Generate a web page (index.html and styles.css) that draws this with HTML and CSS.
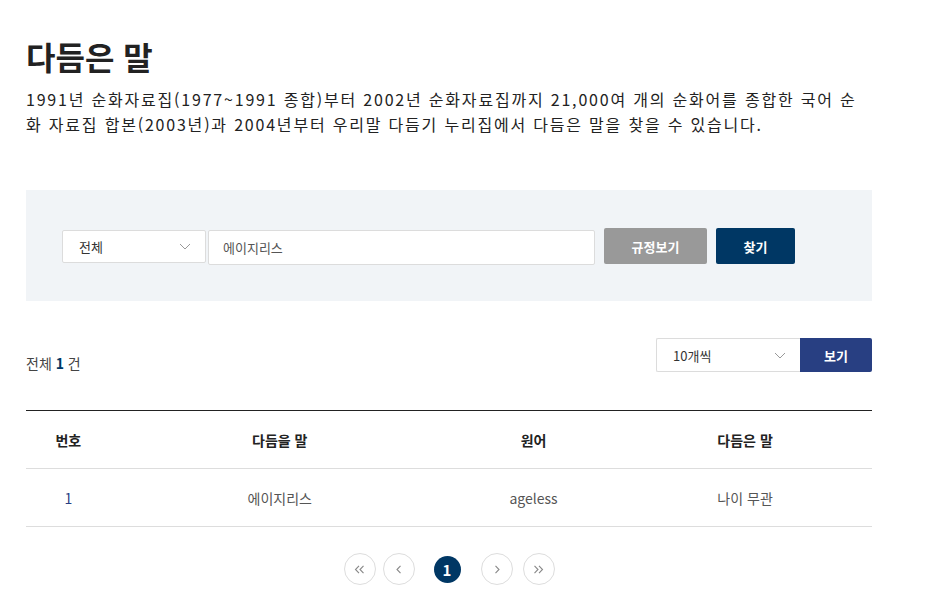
FILE: index.html
```html
<!DOCTYPE html>
<html lang="ko">
<head>
<meta charset="utf-8">
<title>다듬은 말</title>
<link rel="stylesheet" href="styles.css">
</head>
<body>
<div class="page">
  <h1 class="title">다듬은 말</h1>
  <p class="desc">1991년 순화자료집(1977~1991 종합)부터 2002년 순화자료집까지 21,000여 개의 순화어를 종합한 국어 순화 자료집 합본(2003년)과 2004년부터 우리말 다듬기 누리집에서 다듬은 말을 찾을 수 있습니다.</p>

  <div class="search-box">
    <div class="select select-type">
      <span>전체</span>
      <svg class="chev" width="12" height="7" viewBox="0 0 12 7"><path d="M1 1l5 5 5-5" fill="none" stroke="#999" stroke-width="1"/></svg>
    </div>
    <div class="input">에이지리스</div>
    <button class="btn btn-gray">규정보기</button>
    <button class="btn btn-navy">찾기</button>
  </div>

  <div class="list-head">
    <div class="total">전체 <strong>1</strong> 건</div>
    <div class="view-ctl">
      <div class="select select-count">
        <span>10개씩</span>
        <svg class="chev" width="12" height="7" viewBox="0 0 12 7"><path d="M1 1l5 5 5-5" fill="none" stroke="#999" stroke-width="1"/></svg>
      </div>
      <button class="btn btn-blue">보기</button>
    </div>
  </div>

  <table class="tbl">
    <colgroup>
      <col class="c1"><col class="c2"><col class="c3"><col class="c4">
    </colgroup>
    <thead>
      <tr><th>번호</th><th>다듬을 말</th><th>원어</th><th>다듬은 말</th></tr>
    </thead>
    <tbody>
      <tr><td class="num">1</td><td>에이지리스</td><td>ageless</td><td>나이 무관</td></tr>
    </tbody>
  </table>

  <div class="paging">
    <span class="pg pg-first"><svg width="11" height="9" viewBox="0 0 11 9"><path d="M5 0.8L1.5 4.5 5 8.2M9.5 0.8L6 4.5l3.5 3.7" fill="none" stroke="#888" stroke-width="1.1"/></svg></span>
    <span class="pg pg-prev"><svg width="6" height="9" viewBox="0 0 6 9"><path d="M4.5 0.8L1 4.5l3.5 3.7" fill="none" stroke="#888" stroke-width="1.1"/></svg></span>
    <span class="pg-cur">1</span>
    <span class="pg pg-next"><svg width="6" height="9" viewBox="0 0 6 9"><path d="M1.5 0.8L5 4.5 1.5 8.2" fill="none" stroke="#888" stroke-width="1.1"/></svg></span>
    <span class="pg pg-last"><svg width="11" height="9" viewBox="0 0 11 9"><path d="M1.5 0.8L5 4.5 1.5 8.2M6 0.8l3.5 3.7L6 8.2" fill="none" stroke="#888" stroke-width="1.1"/></svg></span>
  </div>
</div>
</body>
</html>
```

FILE: styles.css
```css
* { box-sizing: border-box; }
html, body { margin: 0; padding: 0; background: #fff; }
body {
  font-family: "Noto Sans CJK KR", "Noto Sans", sans-serif;
  color: #222;
}
.page {
  width: 846px;
  margin-left: 26px;
  padding-top: 34px;
}
.title {
  margin: 0;
  font-size: 32px;
  font-weight: 700;
  line-height: 44px;
  color: #222;
}
.desc {
  margin: 9px 0 0;
  font-size: 16px;
  line-height: 25px;
  letter-spacing: 1.8px;
  color: #222;
}
.search-box {
  margin-top: 53px;
  height: 111px;
  background: #f1f4f7;
  display: flex;
  align-items: center;
  padding-left: 36px;
  padding-top: 4px;
}
.select {
  background: #fff;
  border: 1px solid #dcdcdc;
  border-radius: 2px;
  display: flex;
  align-items: center;
  justify-content: space-between;
  font-size: 13px;
  color: #333;
}
.select-type {
  width: 144px;
  height: 33px;
  padding: 0 14px 0 16px;
  margin-top: -3px;
}
.input {
  width: 387px;
  height: 35px;
  margin-left: 2px;
  background: #fff;
  border: 1px solid #dcdcdc;
  border-radius: 2px;
  display: flex;
  align-items: center;
  padding-left: 14px;
  font-size: 13px;
  color: #555;
}
.btn {
  border: 0;
  border-radius: 2px;
  font-family: inherit;
  font-size: 13px;
  font-weight: 700;
  color: #fff;
  padding: 0;
  height: 36px;
}
.btn-gray { background: #999; width: 103px; margin-left: 9px; margin-top: -3px; }
.btn-navy { background: #003764; width: 79px; margin-left: 9px; margin-top: -3px; }
.btn-blue { background: #283f82; width: 72px; height: 34px; border-radius: 0 2px 2px 0; }

.list-head {
  margin-top: 37px;
  display: flex;
  justify-content: space-between;
  align-items: flex-end;
}
.total {
  font-size: 14px;
  color: #444;
  line-height: 20px;
  margin-bottom: -1px;
}
.total strong { color: #003764; font-weight: 700; }
.view-ctl { display: flex; }
.select-count {
  width: 144px;
  height: 34px;
  padding: 0 14px 0 16px;
  border-right: 0;
  border-radius: 2px 0 0 2px;
}

.tbl {
  width: 846px;
  margin-top: 38px;
  border-collapse: collapse;
  border-top: 1px solid #222;
  table-layout: fixed;
}
.c1 { width: 10%; }
.c2 { width: 40%; }
.c3 { width: 20%; }
.c4 { width: 30%; }
.tbl th {
  height: 58px;
  font-size: 14px;
  font-weight: 700;
  color: #222;
  border-bottom: 1px solid #ddd;
  text-align: center;
}
.tbl td {
  height: 58px;
  font-size: 14px;
  color: #555;
  text-align: center;
  border-bottom: 1px solid #ddd;
}
.tbl td.num { color: #283f82; }

.paging {
  margin-top: 26px;
  display: flex;
  justify-content: center;
  align-items: center;
}
.pg {
  width: 32px;
  height: 32px;
  border: 1px solid #ddd;
  border-radius: 50%;
  display: flex;
  align-items: center;
  justify-content: center;
}
.pg-prev { margin-left: 7px; }
.pg-next { margin-right: 10px; }
.pg-cur {
  width: 27px;
  height: 27px;
  border-radius: 50%;
  background: #003764;
  color: #fff;
  font-weight: 700;
  font-size: 15px;
  display: flex;
  align-items: center;
  justify-content: center;
  margin: 0 20px 0 19px;
}
```
